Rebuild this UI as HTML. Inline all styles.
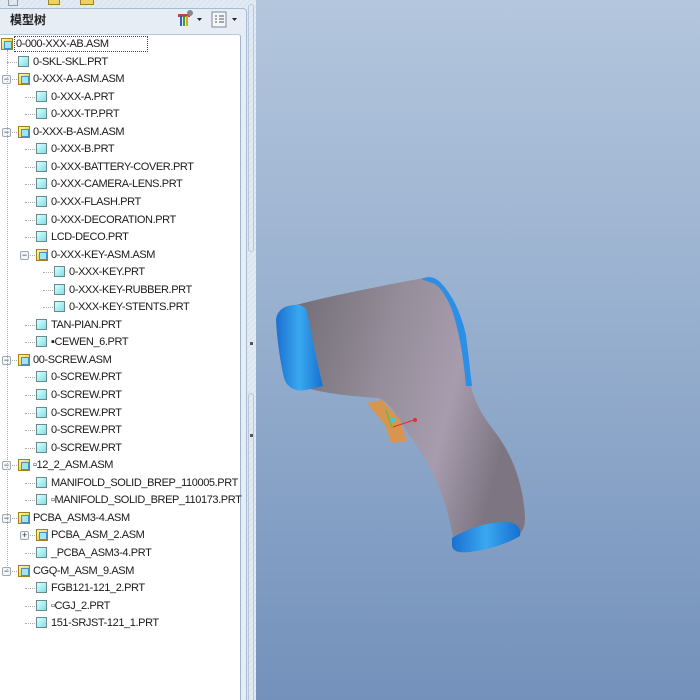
<!DOCTYPE html>
<html><head><meta charset="utf-8"><style>
*{margin:0;padding:0;box-sizing:border-box}
html,body{width:700px;height:700px;overflow:hidden}
body{position:relative;background:#dfe8f2;font-family:"Liberation Sans","Noto Sans CJK SC",sans-serif}
#panel{position:absolute;left:0;top:0;width:256px;height:700px;background:repeating-linear-gradient(135deg,#dbe5f0 0 2px,#e3ebf4 2px 4px)}
#frame{position:absolute;left:-4px;top:8px;width:251px;height:700px;border:1px solid #a9bbd0;border-radius:4px;background:#e6edf5}
#title{position:absolute;left:10px;top:11px;font-size:12px;font-weight:bold;color:#222}
#tree{position:absolute;left:0;top:34px;width:241px;height:666px;background:#fff;border-right:1px solid #9fb3c9;border-top:1px solid #b9c8d8;border-top-right-radius:3px}
#vp{position:absolute;left:256px;top:0;width:444px;height:700px;background:linear-gradient(#b3c6dc,#98b0cf 45%,#7391bb)}
.r{position:absolute;font-size:11px;letter-spacing:-0.4px;color:#1a1a1a;white-space:nowrap;line-height:14px}
.i{position:absolute;width:11px;height:11px;border:1px solid #6a8a8a;background:linear-gradient(135deg,#d8ffff,#7fe0e8)}
.a{position:absolute;width:12px;height:12px;border:1px solid #a08020;background:linear-gradient(135deg,#fff6b0,#e8c030)}
.a:after{content:"";position:absolute;left:2px;top:2px;width:6px;height:6px;border:1px solid #4b90c0;background:#9ee6f0}
.m{position:absolute;width:9px;height:9px;border:1px solid #9aa8b8;border-radius:2px;background:#f4f6f8;font-size:9px;line-height:7px;text-align:center;color:#333}
.v{position:absolute;border-left:1px dotted #aaa}
.h{position:absolute;border-top:1px dotted #aaa}
</style></head><body>
<div id="panel"><div id="frame"></div>
<div style="position:absolute;left:8px;top:0;width:10px;height:6px;border:1px solid #999;border-top:0"></div>
<div style="position:absolute;left:48px;top:0;width:12px;height:5px;background:#f0d060;border:1px solid #a08020;border-top:0"></div>
<div style="position:absolute;left:80px;top:0;width:14px;height:5px;background:#f0d060;border:1px solid #a08020;border-top:0"></div>
<div id="title">模型树</div>
<svg style="position:absolute;left:176px;top:9px" width="70" height="20">
<rect x="2" y="5" width="12" height="3" fill="#c04040"/><rect x="4" y="7" width="2" height="10" fill="#3060c0"/><rect x="7" y="7" width="2" height="10" fill="#30a040"/><rect x="10" y="7" width="2" height="10" fill="#e0a020"/><circle cx="14" cy="4" r="3" fill="#888"/>
<path d="M21 9h5l-2.5 3z" fill="#222"/>
<rect x="36" y="3" width="14" height="15" fill="#f4f6f8" stroke="#7a8a9a"/><path d="M39 7h2M39 10h2M39 13h2M43 7h5M43 10h5M43 13h5" stroke="#556"/>
<path d="M56 9h5l-2.5 3z" fill="#222"/>
</svg>
<div id="tree"></div>
<div style="position:absolute;left:248px;top:4px;width:6px;height:248px;border:1px solid #b7c8da;border-radius:3px"></div>
<div style="position:absolute;left:250px;top:342px;width:3px;height:3px;background:#555"></div>
<div style="position:absolute;left:248px;top:393px;width:6px;height:310px;border:1px solid #b7c8da;border-radius:3px"></div>
<div style="position:absolute;left:250px;top:434px;width:3px;height:3px;background:#555"></div>
</div>
<div id="vp">
<svg width="444" height="700" viewBox="256 0 444 700">
<defs>
<linearGradient id="g" x1="0" y1="0" x2="1" y2="0.3"><stop offset="0" stop-color="#6f6b74"/><stop offset="0.45" stop-color="#958d99"/><stop offset="0.75" stop-color="#a79cae"/><stop offset="1" stop-color="#7d7682"/></linearGradient>
<linearGradient id="b" x1="0" y1="0" x2="1" y2="0"><stop offset="0" stop-color="#1a70d0"/><stop offset="0.5" stop-color="#3aa8f0"/><stop offset="1" stop-color="#1670d0"/></linearGradient>
</defs>
<path d="M292 306 C330 296 370 288 424 278 C448 285 462 320 467 360 C470 395 478 410 495 432 C515 458 524 490 525 518 C525 530 520 535 515 536 L455 548 C452 530 448 510 440 490 C430 462 412 440 398 418 C392 408 385 400 378 398 C350 396 325 394 300 386 C293 360 290 330 292 306Z" fill="url(#g)"/>
<path d="M276 320 C277 308 288 304 300 305 L306 308 C312 335 316 360 323 386 L306 390 C296 392 287 388 284 378 C280 360 277 340 276 320Z" fill="url(#b)"/>
<path d="M421 279 Q432 274 440 282 Q458 300 466 335 L472 386 L466 386 Q462 340 452 310 Q444 290 435 284Z" fill="#2d8ee6"/>
<path d="M452 538 Q478 522 508 522 Q522 524 520 536 Q500 548 470 552 Q452 554 452 545Z" fill="url(#b)"/>
<path d="M367 403 L382 400 L400 420 L407 441 L391 443 L385 425Z" fill="#d89550"/>
<path d="M386 410 L392 428" stroke="#30d040" stroke-width="1"/><circle cx="393" cy="420" r="2.5" fill="#30d0e0"/><path d="M393 427 L414 420" stroke="#e03030"/><circle cx="415" cy="420" r="2" fill="#e03030"/>
</svg>
</div>
<div id="rows"></div>
<script>
var d=[[0,'a','0-000-XXX-AB.ASM'],[1,'i','0-SKL-SKL.PRT'],[1,'a','0-XXX-A-ASM.ASM','-'],[2,'i','0-XXX-A.PRT'],[2,'i','0-XXX-TP.PRT'],[1,'a','0-XXX-B-ASM.ASM','-'],[2,'i','0-XXX-B.PRT'],[2,'i','0-XXX-BATTERY-COVER.PRT'],[2,'i','0-XXX-CAMERA-LENS.PRT'],[2,'i','0-XXX-FLASH.PRT'],[2,'i','0-XXX-DECORATION.PRT'],[2,'i','LCD-DECO.PRT'],[2,'a','0-XXX-KEY-ASM.ASM','-'],[3,'i','0-XXX-KEY.PRT'],[3,'i','0-XXX-KEY-RUBBER.PRT'],[3,'i','0-XXX-KEY-STENTS.PRT'],[2,'i','TAN-PIAN.PRT'],[2,'i','\u25aaCEWEN_6.PRT'],[1,'a','00-SCREW.ASM','-'],[2,'i','0-SCREW.PRT'],[2,'i','0-SCREW.PRT'],[2,'i','0-SCREW.PRT'],[2,'i','0-SCREW.PRT'],[2,'i','0-SCREW.PRT'],[1,'a','\u25ab12_2_ASM.ASM','-'],[2,'i','MANIFOLD_SOLID_BREP_110005.PRT'],[2,'i','\u25abMANIFOLD_SOLID_BREP_110173.PRT'],[1,'a','PCBA_ASM3-4.ASM','-'],[2,'a','PCBA_ASM_2.ASM','+'],[2,'i','_PCBA_ASM3-4.PRT'],[1,'a','CGQ-M_ASM_9.ASM','-'],[2,'i','FGB121-121_2.PRT'],[2,'i','\u25abCGJ_2.PRT'],[2,'i','151-SRJST-121_1.PRT']];
var h='';
d.forEach(function(e,k){var y=44+k*17.55,L=e[0],ix=(L==0?1:18*L),t=ix+15;
if(L>0)h+='<div class="h" style="left:'+(ix-11)+'px;top:'+Math.round(y)+'px;width:10px"></div>';
h+='<div class="'+e[1]+'" style="left:'+ix+'px;top:'+Math.round(y-6)+'px"></div>';
if(e[3])h+='<div class="m" style="left:'+(ix-16)+'px;top:'+Math.round(y-4)+'px">'+(e[3]=='-'?'\u2212':'+')+'</div>';
h+='<div class="r" style="left:'+t+'px;top:'+Math.round(y-7)+'px">'+e[2]+'</div>';});
h+='<div class="v" style="left:7px;top:50px;height:520px"></div>';
document.getElementById('rows').innerHTML=h;
</script>
<div style="position:absolute;left:14px;top:36px;width:134px;height:16px;border:1px dotted #444"></div>
</body></html>
